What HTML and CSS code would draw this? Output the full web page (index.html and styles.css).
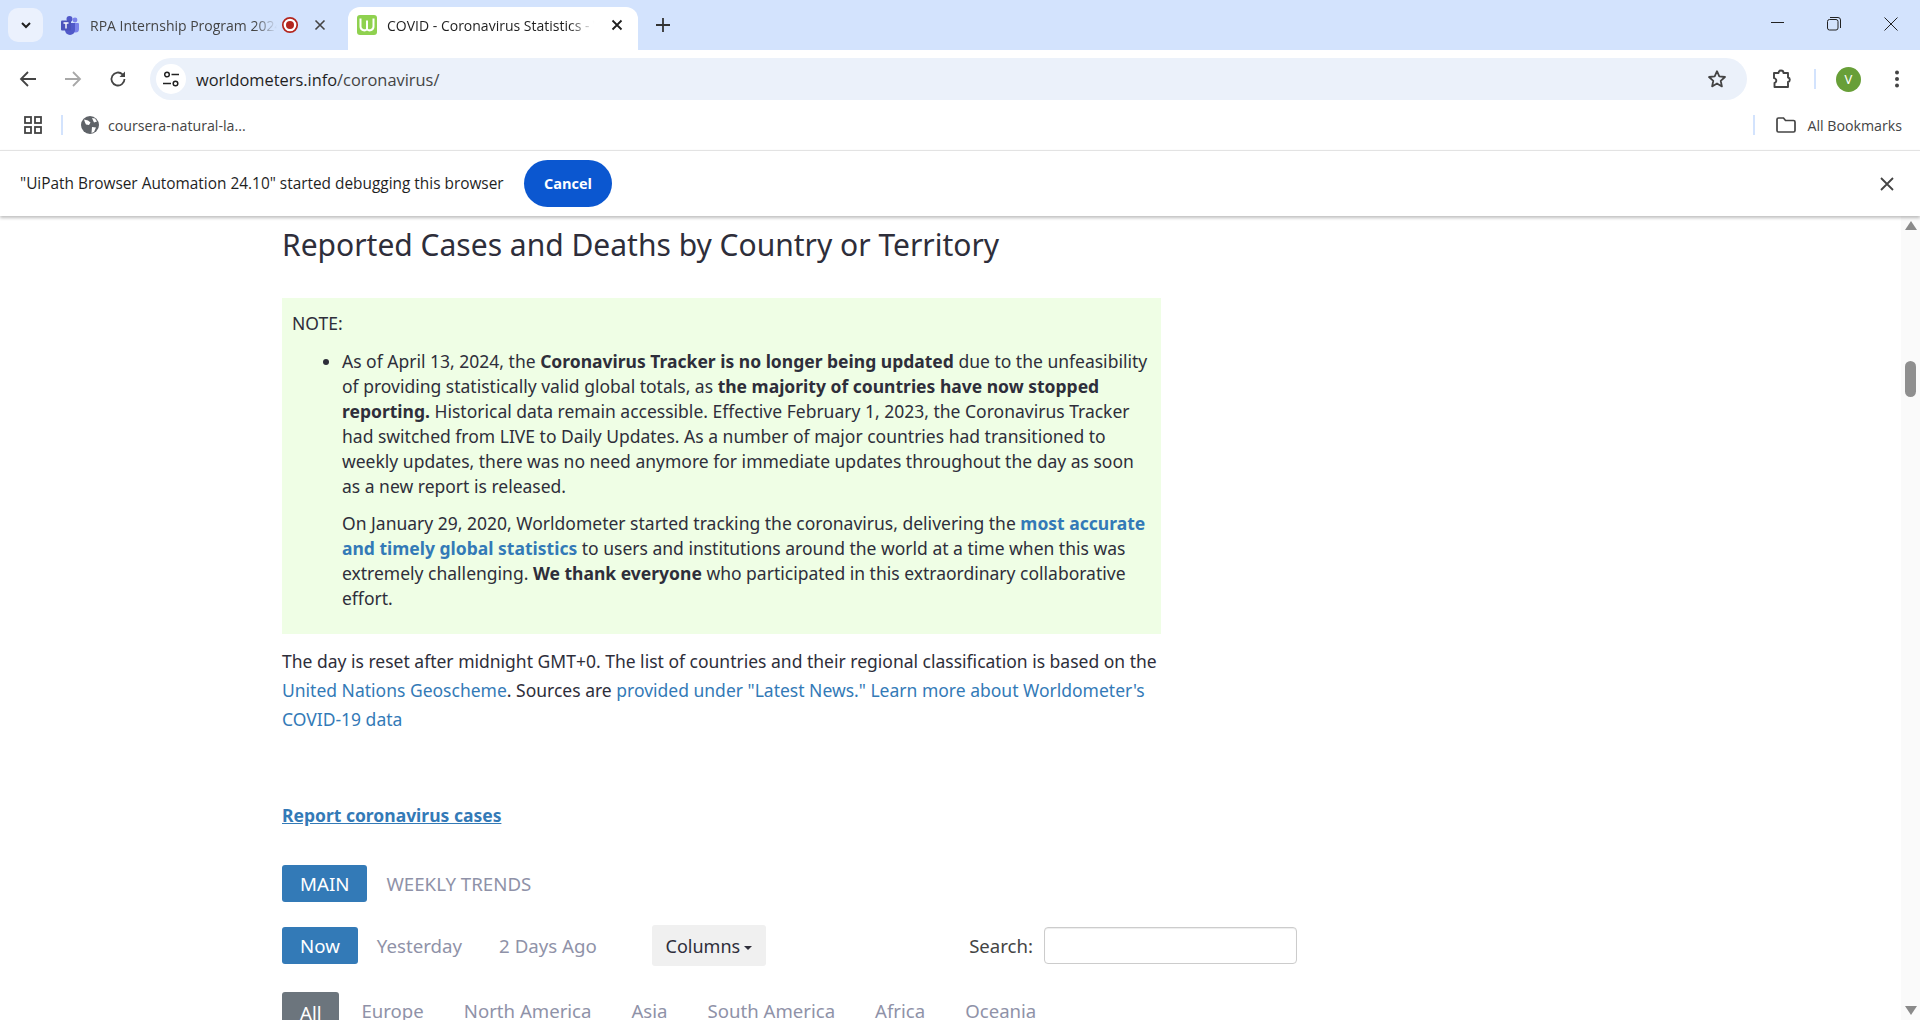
FILE: index.html
```html
<!DOCTYPE html>
<html lang="en">
<head>
<meta charset="utf-8">
<title>COVID - Coronavirus Statistics - Worldometer</title>
<link rel="stylesheet" href="styles.css">
</head>
<body>
<div class="app">
  <header class="tabstrip">
    <button class="tab-search"><svg width="12" height="12" viewBox="0 0 12 12"><path d="M2 4l4 4 4-4" fill="none" stroke="#1f1f1f" stroke-width="2"/></svg></button>
    <div class="tab background">
      <svg class="fav" width="20" height="20" viewBox="0 0 20 20"><circle cx="15" cy="5" r="2.400" fill="#7b83eb"/><path d="M12 8h6a1 1 0 0 1 1 1v5a3.500 3.500 0 0 1-7 0z" fill="#7b83eb"/><circle cx="9.500" cy="4" r="3" fill="#5059c9"/><path d="M5 8h10v7a5 5 0 0 1-10 0z" fill="#5059c9"/><rect x="1" y="5.500" width="10" height="10" rx="1" fill="#4b53bc"/><path d="M3.500 8h5M6 8v5.500" stroke="#fff" stroke-width="1.400" fill="none"/></svg>
      <span class="tab-title">RPA Internship Program 2024</span>
      <svg class="rec" width="18" height="18" viewBox="0 0 18 18"><circle cx="9" cy="9" r="7.200" fill="#fff" stroke="#b3261e" stroke-width="1.700"/><circle cx="9" cy="9" r="4" fill="#b3261e"/></svg>
      <svg class="x" width="12" height="12" viewBox="0 0 12 12"><path d="M1.500 1.500l9 9M10.500 1.500l-9 9" stroke="#444" stroke-width="1.600"/></svg>
    </div>
    <div class="tab active">
      <svg class="fav" width="20" height="20" viewBox="0 0 20 20"><rect width="20" height="20" rx="3" fill="#8fd14f"/><path d="M3.500 3.500v8a3.800 3.800 0 0 0 6.500 2.700 3.800 3.800 0 0 0 6.500-2.700v-8M10 5.500v8.500" fill="none" stroke="#fff" stroke-width="2"/></svg>
      <span class="tab-title">COVID - Coronavirus Statistics - Worldometer</span>
      <svg class="x" width="12" height="12" viewBox="0 0 12 12"><path d="M1.500 1.500l9 9M10.500 1.500l-9 9" stroke="#1f1f1f" stroke-width="1.800"/></svg>
    </div>
    <svg class="plus" width="14" height="14" viewBox="0 0 14 14"><path d="M7 0v14M0 7h14" stroke="#333" stroke-width="1.800"/></svg>
    <div class="winctl">
      <svg width="14" height="14" viewBox="0 0 14 14"><path d="M0 5.500h13" stroke="#222" stroke-width="1"/></svg>
      <svg width="14" height="14" viewBox="0 0 14 14"><rect x=".5" y="2.500" width="10.500" height="10.500" rx="2" fill="none" stroke="#222"/><path d="M3 .5h8a2.500 2.500 0 0 1 2.500 2.500v8" fill="none" stroke="#222"/></svg>
      <svg width="14" height="14" viewBox="0 0 14 14"><path d="M.5.5l13 13M13.500.5l-13 13" stroke="#222" stroke-width="1"/></svg>
    </div>
  </header>

  <nav class="toolbar">
    <svg class="navicon" width="18" height="18" viewBox="0 0 18 18"><path d="M17 9H2M9 2L2 9l7 7" fill="none" stroke="#444" stroke-width="1.800"/></svg>
    <svg class="navicon" width="18" height="18" viewBox="0 0 18 18"><path d="M1 9h15M9 2l7 7-7 7" fill="none" stroke="#a8a8a8" stroke-width="1.800"/></svg>
    <svg class="navicon reload" width="18" height="18" viewBox="0 0 18 18"><path d="M15.500 9a6.500 6.500 0 1 1-2-4.700L15.500 6" fill="none" stroke="#444" stroke-width="1.800"/><path d="M16 1.500V7h-5.500z" fill="#444"/></svg>
    <div class="omnibox">
      <span class="site-chip"><svg width="20" height="20" viewBox="0 0 20 20"><circle cx="6" cy="5.500" r="2.300" fill="none" stroke="#222" stroke-width="1.500"/><path d="M10.500 5.500H18M2 14.500h8" stroke="#222" stroke-width="1.600"/><circle cx="14.500" cy="14.500" r="2.300" fill="none" stroke="#222" stroke-width="1.500"/></svg></span>
      <span class="url">worldometers.info<span class="url-path">/coronavirus/</span></span>
      <svg class="star" width="20" height="20" viewBox="0 0 20 20"><path d="M10 2.200l2.300 5.200 5.700.6-4.300 3.800 1.200 5.600L10 14.500l-4.900 2.900 1.200-5.600L2 8l5.700-.6z" fill="none" stroke="#444" stroke-width="1.800" stroke-linejoin="round"/></svg>
    </div>
    <svg class="ext" width="22" height="22" viewBox="0 0 22 22"><path d="M3 5h4.500a2.500 2.500 0 0 1 5 0H17v4.500a2.300 2.300 0 0 1 0 4.500v5H3.500v-4a2.500 2.500 0 0 0 1.500-3.500A2.500 2.500 0 0 0 3 10z" fill="none" stroke="#444" stroke-width="1.900" stroke-linejoin="round"/></svg>
    <span class="tool-div"></span>
    <span class="avatar">V</span>
    <svg class="menu" width="6" height="18" viewBox="0 0 6 18"><circle cx="3" cy="2.500" r="2" fill="#444"/><circle cx="3" cy="9" r="2" fill="#444"/><circle cx="3" cy="15.500" r="2" fill="#444"/></svg>
  </nav>

  <div class="bookmarks">
    <svg class="apps" width="20" height="20" viewBox="0 0 20 20"><g fill="none" stroke="#444" stroke-width="1.800"><rect x="2" y="2" width="6" height="6"/><rect x="12" y="2" width="6" height="6"/><rect x="2" y="12" width="6" height="6"/><rect x="12" y="12" width="6" height="6"/></g></svg>
    <span class="bm-div"></span>
    <svg class="globe" width="18" height="18" viewBox="0 0 18 18"><circle cx="9" cy="9" r="9" fill="#5f6368"/><path d="M3 3.500l4 1 2.500 2-1.500 2.500-3-.5-1-2zM11 11l4 .5-2 4.500-2.500 1zM11 2l3 .5 2 3-3 1z" fill="#fff"/></svg>
    <span class="bm-label">coursera-natural-la...</span>
    <span class="bm-div right"></span>
    <svg class="folder" width="20" height="16" viewBox="0 0 20 16"><path d="M1 2.500A1.500 1.500 0 0 1 2.500 1h5l2 2.500h8A1.500 1.500 0 0 1 19 5v8.500a1.500 1.500 0 0 1-1.500 1.500h-15A1.500 1.500 0 0 1 1 13.500z" fill="none" stroke="#444" stroke-width="1.700"/></svg>
    <span class="bm-all">All Bookmarks</span>
  </div>

  <div class="infobar">
    <span class="info-text">"UiPath Browser Automation 24.10" started debugging this browser</span>
    <button class="cancel">Cancel</button>
    <svg class="info-close" width="14" height="14" viewBox="0 0 14 14"><path d="M1 1l12 12M13 1L1 13" stroke="#444" stroke-width="1.800"/></svg>
  </div>

  <div class="viewport">
    <main class="page">
      <h2 class="title">Reported Cases and Deaths by Country or Territory</h2>
      <section class="note">
        <div class="note-head">NOTE:</div>
        <ul class="note-list">
          <li>
            <p>As of April 13, 2024, the <b>Coronavirus Tracker is no longer being updated</b> due to the unfeasibility of providing statistically valid global totals, as <b>the majority of countries have now stopped reporting.</b> Historical data remain accessible. Effective February 1, 2023, the Coronavirus Tracker had switched from LIVE to Daily Updates. As a number of major countries had transitioned to weekly updates, there was no need anymore for immediate updates throughout the day as soon as a new report is released.</p>
            <p>On January 29, 2020, Worldometer started tracking the coronavirus, delivering the <a class="strong-link" href="#">most accurate and timely global statistics</a> to users and institutions around the world at a time when this was extremely challenging. <b>We thank everyone</b> who participated in this extraordinary collaborative effort.</p>
          </li>
        </ul>
      </section>
      <p class="about">The day is reset after midnight GMT+0. The list of countries and their regional classification is based on the <a href="#">United Nations Geoscheme</a>. Sources are <a href="#">provided under "Latest News."</a> <a href="#">Learn more about Worldometer's COVID-19 data</a></p>
      <p class="report"><a href="#">Report coronavirus cases</a></p>
      <div class="pills main-pills">
        <span class="pill on">MAIN</span>
        <span class="pill">WEEKLY TRENDS</span>
      </div>
      <div class="controls">
        <div class="pills">
          <span class="pill on">Now</span>
          <span class="pill">Yesterday</span>
          <span class="pill">2 Days Ago</span>
        </div>
        <button class="columns">Columns<i class="caret"></i></button>
        <label class="search">Search:<input class="search-input" type="text"></label>
      </div>
      <div class="pills regions">
        <span class="pill grey">All</span>
        <span class="pill">Europe</span>
        <span class="pill">North America</span>
        <span class="pill">Asia</span>
        <span class="pill">South America</span>
        <span class="pill">Africa</span>
        <span class="pill">Oceania</span>
      </div>
    </main>
    <aside class="scrollbar">
      <i class="arrow up"></i>
      <i class="thumb"></i>
      <i class="arrow down"></i>
    </aside>
  </div>
</div>
</body>
</html>
```

FILE: styles.css
```css
* { box-sizing: border-box; }
html, body { margin: 0; height: 100%; overflow: hidden; }
body { font-family: "Noto Sans", sans-serif; color: #2e2e3a; background: #fff; }
svg { display: block; flex: none; }
button { font-family: inherit; border: 0; }

.app { display: flex; flex-direction: column; height: 1020px; overflow: hidden; }

/* tab strip */
.tabstrip { height: 50px; background: #d3e3fd; display: flex; align-items: flex-start; flex: none; }
.tab-search { width: 35px; height: 34px; margin: 8px 0 0 8px; border-radius: 10px; background: #ebf1fd; display: flex; align-items: center; justify-content: center; padding: 0; }
.tab { height: 43px; margin-top: 7px; display: flex; align-items: center; padding-bottom: 7px; font-size: 14px; }
.tab.background { width: 305px; padding-left: 17px; padding-right: 22px; color: #444; }
.tab.active { width: 290px; padding-left: 9px; padding-right: 15px; background: #fff; border-radius: 12px 12px 0 0; color: #1f1f1f; }
.fav { margin-right: 10px; }
.tab-title { flex: 1; min-width: 0; overflow: hidden; white-space: nowrap; font-family: "Open Sans", sans-serif; font-size: 14px; -webkit-mask-image: linear-gradient(90deg, #000 88%, transparent); mask-image: linear-gradient(90deg, #000 88%, transparent); }
.rec { margin-left: 4px; }
.x { margin-left: 15px; }
.active .x { margin-left: 17px; }
.plus { margin: 18px 0 0 18px; }
.winctl { margin: 17px 22px 0 auto; display: flex; gap: 42px; }
.winctl svg:last-child { margin-left: 1px; }

/* toolbar */
.toolbar { height: 50px; flex: none; background: #fff; display: flex; align-items: center; padding: 8px 0 0 19px; border-radius: 10px 10px 0 0; }
.navicon { margin-right: 27px; }
.navicon.reload { margin-right: 23px; }
.omnibox { width: 1597px; height: 42px; background: #ebf1fa; border-radius: 21px; display: flex; align-items: center; padding-left: 6px; }
.site-chip { width: 30px; height: 30px; border-radius: 50%; background: #fff; display: flex; align-items: center; justify-content: center; margin-right: 10px; }
.url { font-family: "Open Sans", sans-serif; font-size: 16.400px; color: #1f1f1f; }
.url-path { color: #444; }
.star { margin-left: auto; margin-right: 20px; }
.ext { margin-left: 24px; }
.tool-div { width: 2px; height: 20px; background: #d3e3fd; margin-left: 21px; }
.avatar { width: 25px; height: 25px; border-radius: 50%; background: #689f38; color: #fff; font-size: 13px; display: flex; align-items: center; justify-content: center; margin-left: 20px; }
.menu { margin-left: 33px; }

/* bookmarks */
.bookmarks { height: 50px; flex: none; background: #fff; display: flex; align-items: center; padding: 0 18px 0 23px; font-family: "Open Sans", sans-serif; font-size: 14.200px; color: #444; }
.apps { margin-right: 18px; }
.bm-div { width: 2px; height: 20px; background: #d3e3fd; }
.globe { margin: 0 9px 0 18px; }
.bm-div.right { margin-left: auto; }
.folder { margin: 0 11px 0 21px; }

/* infobar */
.infobar { height: 66px; flex: none; background: #fff; border-top: 1px solid #e3e3e3; display: flex; align-items: center; padding: 0 0 0 20px; position: relative; z-index: 2; box-shadow: 0 2px 3px rgba(0, 0, 0, .25); font-family: "Open Sans", sans-serif; font-size: 15.400px; color: #1f1f1f; }
.info-text { width: 504px; white-space: nowrap; }
.cancel { width: 88px; height: 47px; border-radius: 24px; background: #0b57d0; color: #fff; font-weight: 700; font-size: 14.500px; font-family: "Open Sans", sans-serif; }
.info-close { margin-left: auto; margin-right: 26px; }

/* page */
.viewport { flex: 1; min-height: 0; display: flex; overflow: hidden; }
.page { flex: 1; min-width: 0; padding-left: 282px; overflow: hidden; font-size: 17.500px; line-height: 25px; }
.title { margin: 9px 0 0; font-weight: 400; font-size: 30px; line-height: 40px; color: #2e2e3a; }
.note { width: 879px; margin-top: 33px; padding: 13px 10px 23px; background: #effee5; }
.note-head { height: 24px; }
.note-list { margin: 14px 0 0; padding-left: 50px; }
.note-list p { margin: 0 0 12px; }
.note-list p:last-child { margin-bottom: 0; }
.note-list b, .strong-link { font-weight: 700; }
a { color: #337ab7; text-decoration: none; }
.about { width: 879px; margin: 13px 0 0; line-height: 29px; }
.report { margin: 69px 0 0; font-weight: 700; }
.report a { text-decoration: underline; }

.pills { display: flex; gap: 1px; color: #8f92a8; font-size: 18.700px; }
.pill { padding: 0 18px; height: 37px; line-height: 37px; border-radius: 3px; white-space: nowrap; }
.pill.on { background: #337ab7; color: #fff; }
.pill.grey { background: #6c757d; color: #fff; }
.main-pills { margin-top: 37px; }
.controls { width: 1015px; display: flex; align-items: center; margin-top: 23px; height: 41px; }
.columns { margin-left: 37px; width: 114px; height: 41px; background: #f0f0f0; border-radius: 3px; color: #2e2e3a; font-size: 18px; padding: 0; }
.caret { display: inline-block; border: 4.500px solid transparent; border-top-color: #2e2e3a; border-bottom: 0; margin-left: 4px; vertical-align: middle; }
.search { margin-left: auto; display: flex; align-items: center; gap: 11px; color: #444; font-size: 18.600px; }
.search-input { width: 253px; height: 37px; border: 1px solid #ccc; border-radius: 4px; background: #fff; box-shadow: inset 0 1px 1px rgba(0, 0, 0, .075); }
.regions { margin-top: 26px; font-size: 18.600px; gap: 2px; }
.regions .pill { padding: 0 19px; }
.regions .grey { height: 42px; padding: 0 18px; line-height: 42px; margin: 0 1px 0 0; }

/* scrollbar */
.scrollbar { width: 19px; flex: none; background: #fafafa; display: flex; flex-direction: column; align-items: center; padding: 5px 0; }
.arrow { width: 0; height: 0; border-left: 6px solid transparent; border-right: 6px solid transparent; }
.arrow.up { border-bottom: 9px solid #8a8a8a; }
.arrow.down { border-top: 9px solid #8a8a8a; margin-top: auto; }
.thumb { width: 11px; height: 36px; border-radius: 6px; background: #8f8f8f; margin-top: 131px; }
```
